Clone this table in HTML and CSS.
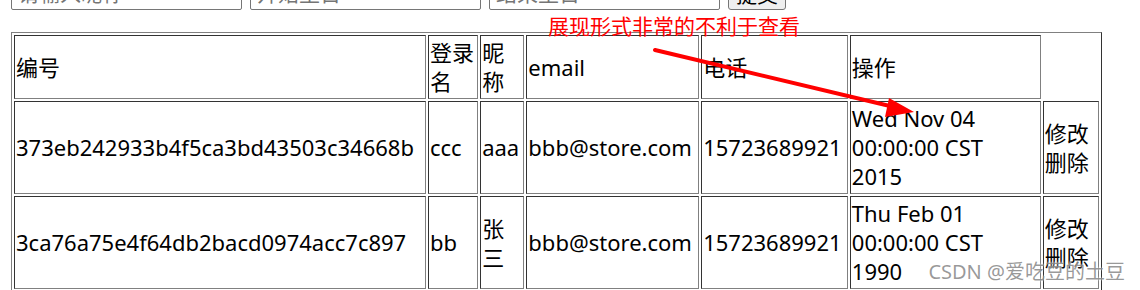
FILE: index.html
```html
<!DOCTYPE html>
<html lang="zh">
  <head>
    <meta charset="UTF-8" />
    <title>用户列表</title>
    <link rel="stylesheet" href="styles.css">
  </head>
  <body>
    <div class="page">
      <form class="search">
        <input class="field" type="text" placeholder="请输入昵称" />
        <input class="field" type="text" placeholder="开始生日" />
        <input class="field" type="text" placeholder="结束生日" />
        <button class="submit" type="button">提交</button>
      </form>

      <!-- annotation over the table -->
      <span class="note">展现形式非常的不利于查看</span>
      <svg class="arrow" width="1140" height="290" viewBox="0 0 1140 290">
        <line x1="655" y1="50" x2="894" y2="107" stroke="#ff0000" stroke-width="4" stroke-linecap="round" />
        <polygon points="914,112 889,98 885,117" fill="#ff0000" />
      </svg>

      <table class="users">
        <colgroup>
          <col class="c-id" />
          <col class="c-login" />
          <col class="c-nick" />
          <col class="c-mail" />
          <col class="c-phone" />
          <col class="c-birth" />
          <col class="c-ops" />
        </colgroup>
        <tr>
          <td>编号</td>
          <td>登录名</td>
          <td>昵称</td>
          <td>email</td>
          <td>电话</td>
          <td>操作</td>
        </tr>
        <tr>
          <td>373eb242933b4f5ca3bd43503c34668b</td>
          <td>ccc</td>
          <td>aaa</td>
          <td>bbb@store.com</td>
          <td>15723689921</td>
          <td>Wed Nov 04 00:00:00 CST 2015</td>
          <td><a href="#">修改</a> <a href="#">删除</a></td>
        </tr>
        <tr>
          <td>3ca76a75e4f64db2bacd0974acc7c897</td>
          <td>bb</td>
          <td>张三</td>
          <td>bbb@store.com</td>
          <td>15723689921</td>
          <td>Thu Feb 01 00:00:00 CST 1990</td>
          <td><a href="#">修改</a> <a href="#">删除</a></td>
        </tr>
      </table>

      <span class="mark">CSDN @爱吃豆的土豆</span>
    </div>
  </body>
</html>
```

FILE: styles.css
```css
body {
  margin: 0;
  padding: 0;
  background: white;
  font-family: "Noto Sans", "Noto Sans CJK SC", sans-serif;
  overflow: hidden;
}
.page {
  position: relative;
  display: flow-root;
  padding: 0 11px;
}
.search {
  display: flex;
  gap: 8px;
  margin-top: -25px;
  height: 35px;
}
.field {
  box-sizing: border-box;
  width: 231px;
  height: 35px;
  border: 1px solid #767676;
  border-radius: 2px;
  padding: 0 6px;
  font-family: inherit;
  font-size: 21px;
}
.field::placeholder {
  color: #757575;
}
.submit {
  box-sizing: border-box;
  width: 58px;
  height: 35px;
  border: 1px solid #767676;
  border-radius: 3px;
  background: #efefef;
  font-family: inherit;
  font-size: 21px;
  color: black;
}
.note {
  position: absolute;
  left: 548px;
  top: 10px;
  color: #ff0000;
  font-family: "Noto Sans CJK SC", sans-serif;
  font-size: 21px;
  line-height: 30px;
  z-index: 2;
}
.arrow {
  position: absolute;
  left: 0;
  top: 0;
  z-index: 2;
}
.users {
  table-layout: fixed;
  width: 1091px;
  margin-top: 22px;
  border-spacing: 2px;
  border: 1px solid;
  border-color: #808080 #333 #333 #808080;
  font-size: 22px;
  line-height: 29px;
}
.users td {
  padding: 2px 1px;
  border: 1px solid;
  border-color: #333 #808080 #808080 #333;
  color: black;
  overflow: hidden;
}
.users a {
  color: black;
  text-decoration: none;
}
.c-id { width: 410px; }
.c-login { width: 50px; }
.c-nick { width: 44px; }
.c-mail { width: 172px; }
.c-phone { width: 146px; }
.c-birth { width: 190px; }
.c-ops { width: 56px; }
.mark {
  position: absolute;
  right: 15px;
  top: 258px;
  font-size: 20px;
  line-height: 28px;
  color: rgba(120, 120, 120, 0.75);
  text-shadow: 0 0 2px white;
  z-index: 3;
}
```
